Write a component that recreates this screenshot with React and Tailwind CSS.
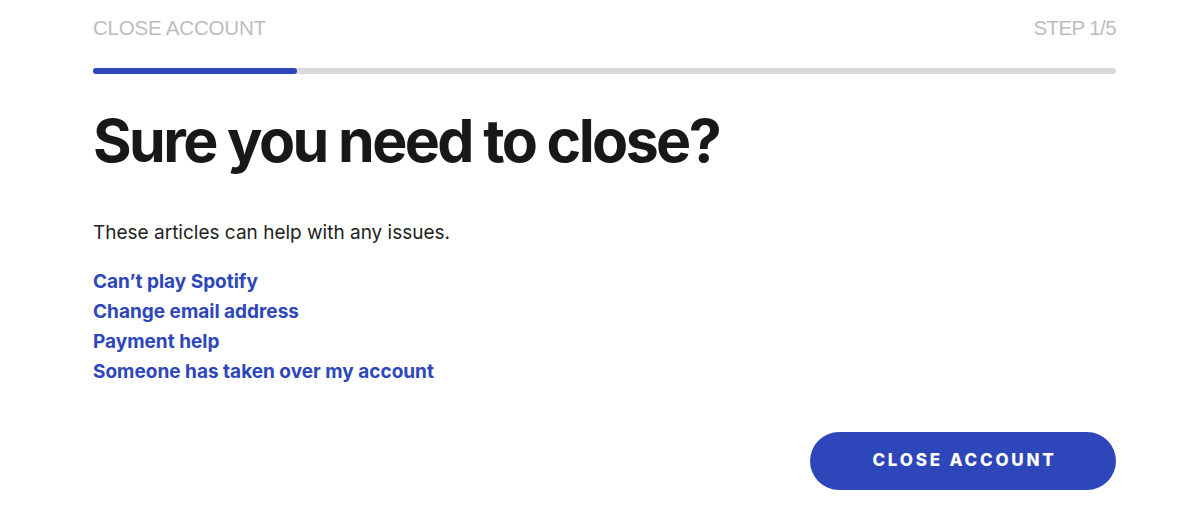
export default function App() {
  return (
    <div className="w-[1200px] h-[531px] bg-white overflow-hidden pl-[93px] pr-[84px]" style={{ fontFamily: "Inter, 'Liberation Sans', sans-serif" }}>
      <div className="flex justify-between pt-[14px] text-[20.5px] leading-[28px] text-[#bdbdbd] tracking-[-0.2px]" style={{ fontFamily: "'Liberation Sans', Arial, sans-serif" }}>
        <span>CLOSE ACCOUNT</span>
        <span className="tracking-[-0.6px]">STEP 1/5</span>
      </div>
      <div className="mt-[26px] h-[6px] rounded-full bg-[#d9d9d9] flex">
        <div className="w-[204px] h-full rounded-full bg-[#2d46b9]"></div>
      </div>
      <h1 className="mt-[31px] text-[59px] leading-[72px] font-bold tracking-[-2.6px] text-[#181818]">Sure you need to close?</h1>
      <p className="mt-[44px] text-[19px] leading-[24px] text-[#222]">These articles can help with any issues.</p>
      <div className="mt-[22px] flex flex-col text-[19px] leading-[30px] font-bold text-[#2d46b9]">
        <a>Can’t play Spotify</a>
        <a>Change email address</a>
        <a>Payment help</a>
        <a>Someone has taken over my account</a>
      </div>
      <div className="flex justify-end mt-[45px]">
        <button className="w-[306px] h-[58px] rounded-full bg-[#2d46b9] text-white font-extrabold text-[17px] tracking-[2.8px] pl-[3px]">CLOSE ACCOUNT</button>
      </div>
    </div>
  );
}
